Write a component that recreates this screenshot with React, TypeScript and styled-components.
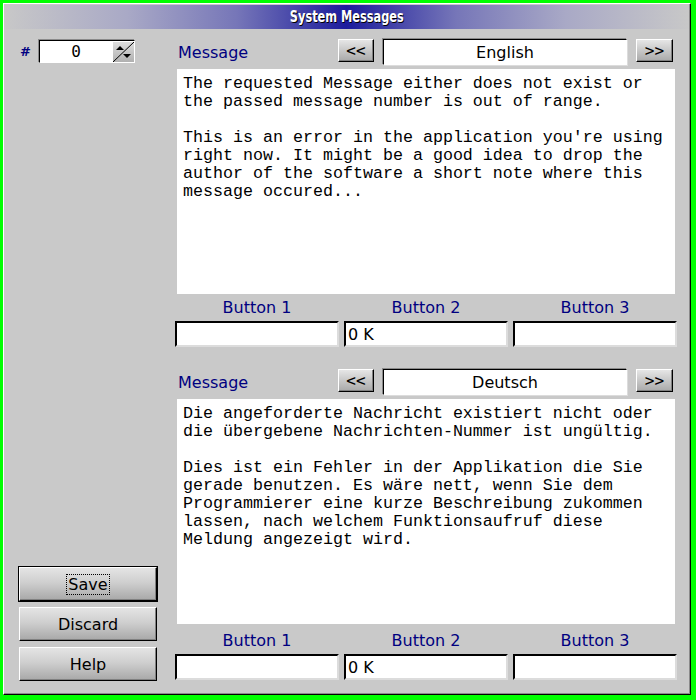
import React from "react";
import styled, { createGlobalStyle } from "styled-components";

const Global = createGlobalStyle`
  html, body { margin: 0; padding: 0; background: #00ff00; }
  body { font-family: "DejaVu Sans", sans-serif; }
  * { box-sizing: border-box; }
`;

const Screen = styled.div`
  width: 696px;
  height: 700px;
  padding: 3px 5px 5px 3px;
  background: #00ff00;
`;

const Window = styled.div`
  width: 688px;
  height: 692px;
  background: #c9c9c9;
  border-top: 1px solid #ffffff;
  border-left: 1px solid #ffffff;
  border-right: 1px solid #000000;
  border-bottom: 1px solid #000000;
  box-shadow: inset -1px -1px 0 #8a8a8a;
  display: flex;
  flex-direction: column;
`;

const TitleBar = styled.div`
  margin: 1px 1px 0 0;
  height: 24px;
  display: flex;
  align-items: center;
  justify-content: center;
  background: linear-gradient(
    to right,
    #c8c8c8 0%,
    #a9a9c6 18%,
    #7676b8 34%,
    #1c1c9c 50%,
    #7676b8 66%,
    #a9a9c6 82%,
    #c8c8c8 100%
  );
`;

const TitleText = styled.span`
  display: inline-block;
  color: #ffffff;
  font-family: "DejaVu Sans Condensed", "DejaVu Sans", sans-serif;
  font-stretch: condensed;
  font-weight: bold;
  font-size: 15px;
  transform: scaleX(0.84);
  text-shadow: 1px 1px 0 #000000;
`;

const Body = styled.div`
  flex: 1;
  display: flex;
`;

const LeftColumn = styled.div`
  width: 171px;
  padding: 11px 0 13px 15px;
  display: flex;
  flex-direction: column;
`;

const NumberRow = styled.div`
  display: flex;
  align-items: center;
  gap: 11px;
  padding-left: 1px;
`;

const Hash = styled.span`
  color: #000080;
  font-family: "DejaVu Sans", sans-serif;
  font-weight: bold;
  font-size: 13px;
  width: 8px;
`;

const Spinner = styled.div`
  width: 96px;
  height: 23px;
  display: flex;
  border-top: 1px solid #000;
  border-left: 1px solid #000;
  border-right: 1px solid #fff;
  border-bottom: 1px solid #fff;
  box-shadow: -1px -1px 0 #8a8a8a;
`;

const SpinValue = styled.div`
  flex: 1;
  background: #fff;
  display: flex;
  align-items: center;
  justify-content: center;
  font-family: "DejaVu Sans Mono", monospace;
  font-size: 16px;
  color: #000;
`;

const SpinButton = styled.div`
  width: 22px;
  height: 21px;
  background: linear-gradient(#dedede, #b0b0b0);
  border-top: 1px solid #fff;
  border-left: 1px solid #fff;
  display: flex;
`;

const Spacer = styled.div`
  flex: 1;
`;

const ButtonStack = styled.div`
  display: flex;
  flex-direction: column;
  gap: 6px;
  width: 138px;
`;

const BigButton = styled.button<{ $default?: boolean }>`
  height: 34px;
  width: 138px;
  margin: 0;
  padding: 0;
  background: linear-gradient(#e4e4e4 0%, #cfcfcf 45%, #a8a8a8 100%);
  border-top: 1px solid #ffffff;
  border-left: 1px solid #ffffff;
  border-right: 1px solid #000000;
  border-bottom: 1px solid #000000;
  box-shadow: inset -1px -1px 0 #808080
    ${(p) => (p.$default ? ", 0 0 0 1px #000000" : "")};
  font-family: "DejaVu Sans", sans-serif;
  font-size: 16px;
  color: #000;
  display: flex;
  align-items: center;
  justify-content: center;
`;

const FocusRing = styled.span`
  border: 1px dotted #000;
  padding: 0 1px;
  line-height: 19px;
`;

const RightColumn = styled.div`
  width: 502px;
  padding-top: 10px;
  display: flex;
  flex-direction: column;
`;

const Section = styled.div<{ $first?: boolean }>`
  display: flex;
  flex-direction: column;
  margin-top: ${(p) => (p.$first ? "0" : "22px")};
`;

const Header = styled.div`
  height: 26px;
  display: flex;
  align-items: flex-start;
  padding-right: 4px;
`;

const SectionLabel = styled.div`
  flex: 1;
  align-self: center;
  padding-left: 3px;
  padding-top: 2px;
  color: #000080;
  font-family: "DejaVu Sans", sans-serif;
  font-size: 16px;
  line-height: 20px;
`;

const ArrowButton = styled.button<{ $width: number }>`
  width: ${(p) => p.$width}px;
  height: 23px;
  margin: 0;
  padding: 0;
  background: linear-gradient(#e6e6e6, #a9a9a9);
  border-top: 1px solid #ffffff;
  border-left: 1px solid #ffffff;
  border-right: 1px solid #000000;
  border-bottom: 1px solid #000000;
  box-shadow: inset -1px -1px 0 #808080;
  font-family: "DejaVu Sans Mono", monospace;
  font-size: 16px;
  color: #000;
  line-height: 20px;
`;

const LanguageField = styled.div`
  width: 244px;
  height: 26px;
  margin: 0 9px 0 9px;
  background: #fff;
  border-top: 1px solid #000;
  border-left: 1px solid #000;
  border-right: 1px solid #fff;
  border-bottom: 1px solid #fff;
  box-shadow: -1px -1px 0 #8a8a8a, 1px 1px 0 #dcdcdc;
  display: flex;
  align-items: center;
  justify-content: center;
  font-family: "DejaVu Sans", sans-serif;
  font-size: 16px;
  color: #000;
`;

const MessageText = styled.div`
  margin: 4px 2px 0 2px;
  height: 225px;
  background: #ffffff;
  padding: 6px 6px 0 6px;
  white-space: pre;
  font-family: "Liberation Mono", monospace;
  font-size: 16.67px;
  line-height: 18px;
  color: #000;
  overflow: hidden;
`;

const LabelRow = styled.div<{ $gap: number }>`
  margin-top: ${(p) => p.$gap}px;
  display: grid;
  grid-template-columns: repeat(3, 1fr);
  column-gap: 5px;
`;

const ButtonLabel = styled.div`
  text-align: center;
  color: #000080;
  font-family: "DejaVu Sans", sans-serif;
  font-size: 16px;
  line-height: 20px;
`;

const FieldRow = styled.div`
  margin-top: 3px;
  display: grid;
  grid-template-columns: repeat(3, 1fr);
  column-gap: 5px;
`;

const TextField = styled.div`
  height: 26px;
  background: #fff;
  border-top: 2px solid #000;
  border-left: 2px solid #000;
  border-right: 2px solid #dcdcdc;
  border-bottom: 2px solid #dcdcdc;
  padding-left: 2px;
  display: flex;
  align-items: center;
  font-family: "DejaVu Sans", sans-serif;
  font-size: 16px;
  color: #000;
`;

type MessageSectionProps = {
  language: string;
  text: string;
  first?: boolean;
  labelGap: number;
};

const MessageSection: React.FC<MessageSectionProps> = ({ language, text, first, labelGap }) => (
  <Section $first={first}>
    <Header>
      <SectionLabel>Message</SectionLabel>
      <ArrowButton $width={36}>&lt;&lt;</ArrowButton>
      <LanguageField>{language}</LanguageField>
      <ArrowButton $width={37}>&gt;&gt;</ArrowButton>
    </Header>
    <MessageText>{text}</MessageText>
    <LabelRow $gap={labelGap}>
      <ButtonLabel>Button 1</ButtonLabel>
      <ButtonLabel>Button 2</ButtonLabel>
      <ButtonLabel>Button 3</ButtonLabel>
    </LabelRow>
    <FieldRow>
      <TextField />
      <TextField>0 K</TextField>
      <TextField />
    </FieldRow>
  </Section>
);

const english = [
  "The requested Message either does not exist or",
  "the passed message number is out of range.",
  "",
  "This is an error in the application you're using",
  "right now. It might be a good idea to drop the",
  "author of the software a short note where this",
  "message occured...",
].join("\n");

const german = [
  "Die angeforderte Nachricht existiert nicht oder",
  "die übergebene Nachrichten-Nummer ist ungültig.",
  "",
  "Dies ist ein Fehler in der Applikation die Sie",
  "gerade benutzen. Es wäre nett, wenn Sie dem",
  "Programmierer eine kurze Beschreibung zukommen",
  "lassen, nach welchem Funktionsaufruf diese",
  "Meldung angezeigt wird.",
].join("\n");

const SpinIcon = () => (
  <svg width="21" height="20" viewBox="0 0 21 20">
    <line x1="0" y1="20" x2="21" y2="0" stroke="#000" strokeWidth="1" />
    <polygon points="3,8 7,4 11,8" fill="#000" />
    <polygon points="10,12 14,16 18,12" fill="#000" />
  </svg>
);

export default function App() {
  return (
    <>
      <Global />
      <Screen>
        <Window>
          <TitleBar>
            <TitleText>System Messages</TitleText>
          </TitleBar>
          <Body>
            <LeftColumn>
              <NumberRow>
                <Hash>#</Hash>
                <Spinner>
                  <SpinValue>0</SpinValue>
                  <SpinButton>
                    <SpinIcon />
                  </SpinButton>
                </Spinner>
              </NumberRow>
              <Spacer />
              <ButtonStack>
                <BigButton $default>
                  <FocusRing>Save</FocusRing>
                </BigButton>
                <BigButton>Discard</BigButton>
                <BigButton>Help</BigButton>
              </ButtonStack>
            </LeftColumn>
            <RightColumn>
              <MessageSection first language="English" text={english} labelGap={4} />
              <MessageSection language="Deutsch" text={german} labelGap={7} />
            </RightColumn>
          </Body>
        </Window>
      </Screen>
    </>
  );
}
